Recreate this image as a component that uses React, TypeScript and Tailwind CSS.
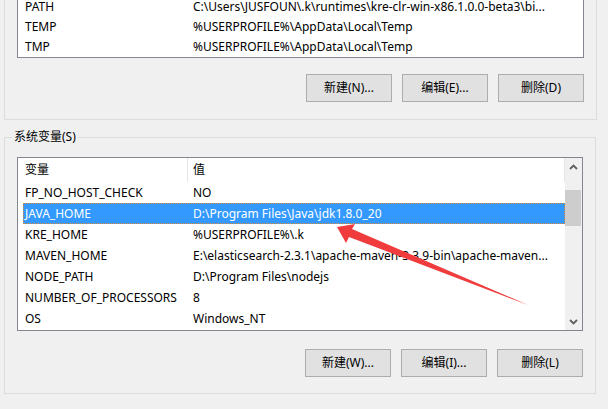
const font = { fontFamily: '"Noto Sans", "Noto Sans CJK SC", sans-serif' };

const userVars = [
  { name: "PATH", value: "C:\\Users\\JUSFOUN\\.k\\runtimes\\kre-clr-win-x86.1.0.0-beta3\\bi..." },
  { name: "TEMP", value: "%USERPROFILE%\\AppData\\Local\\Temp" },
  { name: "TMP", value: "%USERPROFILE%\\AppData\\Local\\Temp" },
];

const sysVars = [
  { name: "FP_NO_HOST_CHECK", value: "NO" },
  { name: "JAVA_HOME", value: "D:\\Program Files\\Java\\jdk1.8.0_20", selected: true },
  { name: "KRE_HOME", value: "%USERPROFILE%\\.k" },
  { name: "MAVEN_HOME", value: "E:\\elasticsearch-2.3.1\\apache-maven-3.3.9-bin\\apache-maven..." },
  { name: "NODE_PATH", value: "D:\\Program Files\\nodejs" },
  { name: "NUMBER_OF_PROCESSORS", value: "8" },
  { name: "OS", value: "Windows_NT" },
];

type Row = { name: string; value: string; selected?: boolean };

const VarRow = ({ row }: { row: Row }) => (
  <div className="h-[21px] pl-[5px] flex">
    <div
      className={
        row.selected
          ? "flex-1 flex items-center bg-[#3399ff] text-white border border-dotted border-[#d88a3a]"
          : "flex-1 flex items-center text-black border border-transparent"
      }
    >
      <div className="w-[168px] pl-[1px] whitespace-nowrap">{row.name}</div>
      <div className="pl-[1px] whitespace-nowrap">{row.value}</div>
    </div>
  </div>
);

const Chevron = ({ down }: { down?: boolean }) => (
  <svg width="9" height="6" viewBox="0 0 9 6">
    <path
      d={down ? "M1 1 L4.5 4.5 L8 1" : "M1 5 L4.5 1.5 L8 5"}
      fill="none"
      stroke="#606060"
      strokeWidth="1.8"
    />
  </svg>
);

const Buttons = ({ labels }: { labels: string[] }) => (
  <div className="flex justify-end gap-[10px]">
    {labels.map((l) => (
      <button
        key={l}
        className="w-[86px] h-[28px] bg-[#e1e1e1] border border-[#adadad] text-[12px] text-black flex items-center justify-center"
      >
        {l}
      </button>
    ))}
  </div>
);

const App = () => {
  return (
    <div className="relative w-[608px] h-[409px] bg-[#f0f0f0] overflow-hidden text-[12px]" style={font}>
      {/* user variables group (scrolled off the top) */}
      <div className="ml-[4px] w-[593px] h-[120px] border-l border-r border-b border-[#dcdcdc] px-[12px]">
        <div className="h-[58px] bg-white border-x border-b border-[#828790] overflow-hidden flex flex-col justify-end">
          {userVars.map((r) => (
            <VarRow key={r.name} row={r} />
          ))}
        </div>
        <div className="mt-[16px]">
          <Buttons labels={["新建(N)...", "编辑(E)...", "删除(D)"]} />
        </div>
      </div>

      {/* system variables group */}
      <div className="relative mt-[17px] ml-[4px] w-[592px] h-[257px] border border-[#dcdcdc] px-[12px] pt-[19px]">
        <span className="absolute left-[7px] top-[-9px] px-[2px] bg-[#f0f0f0] leading-[16px] text-black">
          系统变量(S)
        </span>
        <div className="h-[174px] bg-white border border-[#828790] flex">
          <div className="w-[548px] flex flex-col">
            <div className="h-[24px] flex text-black">
              <div className="w-[170px] pl-[7px] border-r border-[#e5e5e5] flex items-center">变量</div>
              <div className="w-[377px] pl-[5px] border-r border-[#e5e5e5] flex items-center">值</div>
            </div>
            {sysVars.map((r) => (
              <VarRow key={r.name} row={r} />
            ))}
          </div>
          <div className="w-[17px] bg-[#f0f0f0] flex flex-col">
            <div className="h-[17px] flex items-center justify-center">
              <Chevron />
            </div>
            <div className="h-[15px]" />
            <div className="h-[36px] w-[16px] bg-[#cdcdcd]" />
            <div className="flex-1" />
            <div className="h-[17px] flex items-center justify-center">
              <Chevron down />
            </div>
          </div>
        </div>
        <div className="mt-[18px]">
          <Buttons labels={["新建(W)...", "编辑(I)...", "删除(L)"]} />
        </div>
      </div>

      {/* annotation arrow */}
      <svg className="absolute left-0 top-0 pointer-events-none" width="608" height="409">
        <polygon
          points="337,227 355,224 352,229 528,305 349,237 346,243"
          fill="#f03c3c"
        />
      </svg>
    </div>
  );
};

export default App;
